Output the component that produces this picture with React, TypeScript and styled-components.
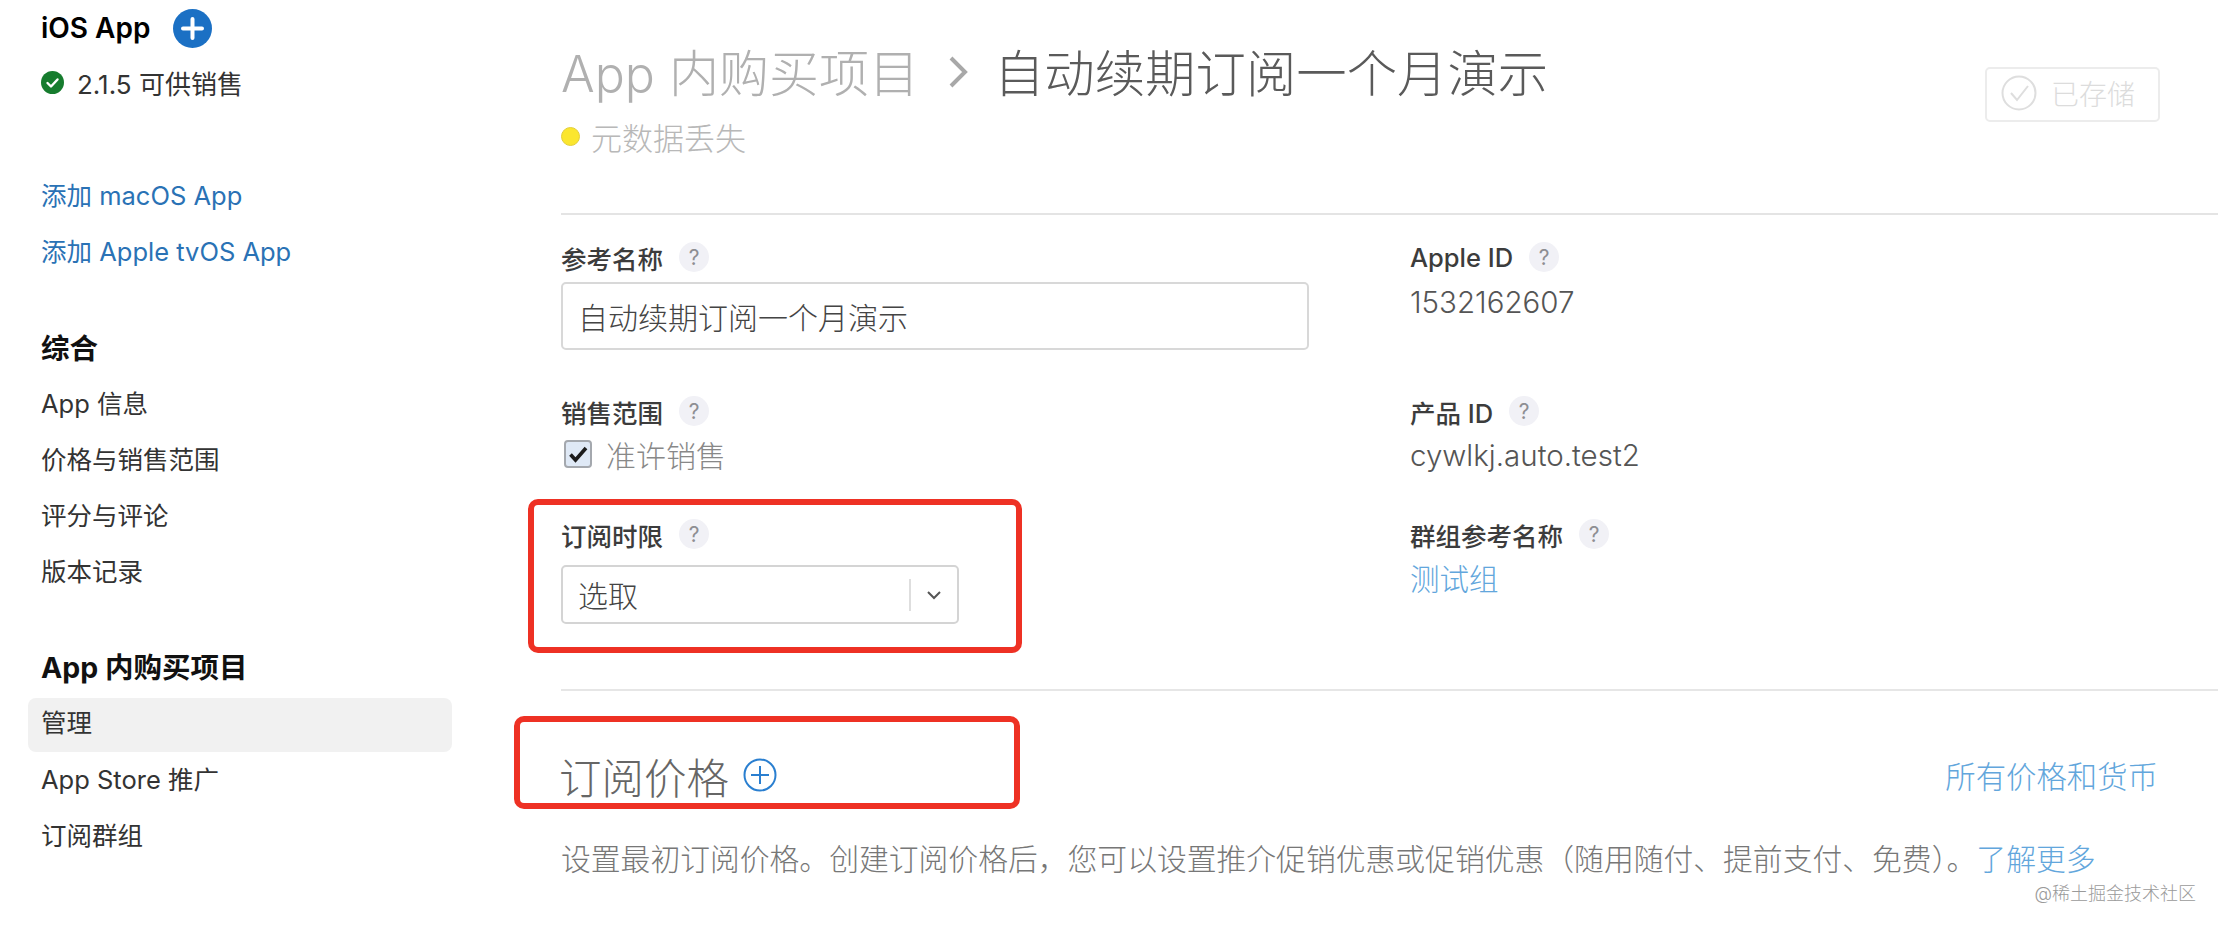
import React from "react";
import styled, { createGlobalStyle } from "styled-components";

const Global = createGlobalStyle`
  html, body { margin: 0; padding: 0; background: #fff; }
  body { font-family: Inter, "Noto Sans CJK SC", sans-serif; color: #333; }
  * { box-sizing: border-box; }
`;

const Page = styled.div`
  position: relative;
  width: 2222px;
  height: 928px;
  overflow: hidden;
  display: flex;
  background: #fff;
`;

const Sidebar = styled.aside`
  width: 561px;
  flex: none;
  padding-left: 41px;
  display: flex;
  flex-direction: column;
`;

const AppHead = styled.div`
  height: 56px;
  display: flex;
  align-items: center;
  gap: 23px;
  font-size: 28px;
  font-weight: 600;
  color: #000;
`;

const Status = styled.div`
  height: 52px;
  display: flex;
  align-items: center;
  gap: 13px;
  font-size: 26px;
  color: #333;
`;

const SideLink = styled.a<{ $top?: number }>`
  height: 56px;
  margin-top: ${(p) => p.$top ?? 0}px;
  padding-bottom: 3px;
  display: flex;
  align-items: center;
  font-size: 25.5px;
  color: #2a72b5;
`;

const SideHeading = styled.div<{ $top: number }>`
  height: 56px;
  margin-top: ${(p) => p.$top}px;
  padding-bottom: 6px;
  display: flex;
  align-items: center;
  font-size: 28.5px;
  font-weight: 700;
  color: #111;
`;

const SideItem = styled.div<{ $active?: boolean }>`
  height: ${(p) => (p.$active ? 54 : 56)}px;
  margin: ${(p) => (p.$active ? "2px 0 1px -13px" : "0")};
  width: ${(p) => (p.$active ? "424px" : "auto")};
  padding: 0 0 ${(p) => (p.$active ? 9 : 7)}px ${(p) => (p.$active ? 13 : 0)}px;
  display: flex;
  align-items: center;
  font-size: 25.5px;
  border-radius: 8px;
  color: #333;
  background: ${(p) => (p.$active ? "#f1f1f1" : "transparent")};
`;

const Main = styled.main`
  width: 1657px;
  flex: none;
`;

const Header = styled.header`
  height: 215px;
  border-bottom: 2px solid #e4e4e4;
  display: flex;
  justify-content: space-between;
  align-items: flex-start;
  padding: 40px 58px 0 0;
`;

const TitleBlock = styled.div`
  display: flex;
  flex-direction: column;
  gap: 16px;
`;

const Title = styled.h1`
  margin: 0;
  height: 60px;
  display: flex;
  align-items: center;
  font-size: 50px;
  font-weight: 300;
  color: #5a5a5a;
`;

const Crumb = styled.span`
  color: #b0b0b0;
`;

const CurrentTitle = styled.span`
  font-size: 50.4px;
`;

const Chevron = styled.svg`
  width: 22px;
  height: 36px;
  margin: 4px 25px 0 28px;
`;

const Sub = styled.div`
  height: 40px;
  display: flex;
  align-items: center;
  gap: 11px;
  font-size: 31px;
  font-weight: 300;
  color: #b8b8b8;
`;

const Dot = styled.span`
  width: 19px;
  height: 19px;
  border-radius: 50%;
  background: #fbe62e;
  border: 1px solid #e3cf3a;
`;

const SaveButton = styled.div`
  margin-top: 27px;
  width: 175px;
  height: 55px;
  border: 2px solid #ececec;
  border-radius: 5px;
  display: flex;
  align-items: center;
  padding: 0 0 3px 14px;
  gap: 14px;
  font-size: 28px;
  font-weight: 300;
  color: #dcdcdc;
`;

const Form = styled.div`
  height: 474px;
  padding-top: 24px;
  display: grid;
  grid-template-columns: 849px 1fr;
  grid-template-rows: 154px 123px 173px;
`;

const Field = styled.div`
  display: flex;
  flex-direction: column;
  align-items: flex-start;
`;

const Label = styled.div`
  height: 36px;
  display: flex;
  align-items: center;
  gap: 16px;
  font-size: 25.5px;
  font-weight: 500;
  color: #3c3c3c;
`;

const Help = styled.span`
  width: 30px;
  height: 30px;
  border-radius: 50%;
  background: #f1f1f6;
  color: #8e8e93;
  font-size: 21px;
  font-weight: 400;
  display: flex;
  align-items: center;
  justify-content: center;
`;

const TextInput = styled.div`
  margin-top: 7px;
  width: 748px;
  height: 68px;
  border: 2px solid #d8d8d8;
  border-radius: 5px;
  padding-left: 15px;
  display: flex;
  align-items: center;
  font-size: 30px;
  font-weight: 300;
  color: #444;
`;

const Value = styled.div<{ $gap: number; $link?: boolean }>`
  margin-top: ${(p) => p.$gap}px;
  height: 40px;
  display: flex;
  align-items: center;
  font-size: 29.5px;
  font-weight: 300;
  color: ${(p) => (p.$link ? "#62a6dc" : "#555")};
`;

const CheckRow = styled.div`
  margin-top: 5px;
  height: 40px;
  padding-left: 3px;
  display: flex;
  align-items: center;
  gap: 14px;
  font-size: 30px;
  font-weight: 300;
  color: #888;
`;

const CheckBox = styled.span`
  width: 28px;
  height: 28px;
  border: 2px solid #a4a8ae;
  border-radius: 4px;
  background: #dfe9f6;
  display: flex;
  align-items: center;
  justify-content: center;
`;

const SelectBox = styled.div`
  margin-top: 13px;
  width: 398px;
  height: 59px;
  border: 2px solid #d4d4d4;
  border-radius: 5px;
  display: flex;
  align-items: center;
  padding: 0 0 0 15px;
  font-size: 30px;
  font-weight: 300;
  color: #444;
`;

const SelectText = styled.span`
  flex: 1;
  margin-top: -2px;
`;

const SelectDivider = styled.span`
  width: 2px;
  height: 32px;
  background: #dedede;
`;

const SelectArrow = styled.span`
  width: 46px;
  display: flex;
  justify-content: center;
`;

const Section = styled.section`
  border-top: 2px solid #e6e6e6;
  padding-top: 54px;
  padding-right: 60px;
`;

const SectionHead = styled.div`
  height: 60px;
  display: flex;
  align-items: center;
`;

const SectionTitle = styled.h2`
  margin: 0 0 0 -2px;
  font-size: 42.5px;
  font-weight: 300;
  color: #666;
`;

const AddIcon = styled.svg`
  width: 34px;
  height: 34px;
  margin-left: 14px;
`;

const AllPrices = styled.a`
  margin-left: auto;
  font-size: 30.4px;
  font-weight: 300;
  color: #62a6dc;
`;

const Para = styled.p`
  margin: 32px 0 0;
  height: 40px;
  display: flex;
  align-items: center;
  font-size: 29.8px;
  font-weight: 300;
  color: #777;
  white-space: nowrap;
`;

const ParaLink = styled.a`
  color: #62a6dc;
`;

const RedBox = styled.div<{ $x: number; $y: number; $w: number; $h: number }>`
  position: absolute;
  left: ${(p) => p.$x}px;
  top: ${(p) => p.$y}px;
  width: ${(p) => p.$w}px;
  height: ${(p) => p.$h}px;
  border: 6px solid #ee3124;
  border-radius: 10px;
`;

const Watermark = styled.div`
  position: absolute;
  right: 26px;
  top: 879px;
  font-size: 18px;
  font-weight: 300;
  color: #9a9a9a;
`;

const Q = () => <Help>?</Help>;

export default function App() {
  return (
    <Page>
      <Global />
      <Sidebar>
        <AppHead>
          iOS App
          <svg width="39" height="39" viewBox="0 0 39 39">
            <circle cx="19.5" cy="19.5" r="19.5" fill="#1b70c4" />
            <path d="M19.5 10v19M10 19.5h19" stroke="#fff" strokeWidth="4" strokeLinecap="round" />
          </svg>
        </AppHead>
        <Status>
          <svg width="23" height="23" viewBox="0 0 23 23">
            <circle cx="11.5" cy="11.5" r="11.5" fill="#167c2e" />
            <path d="M6.5 12l3.5 3.5 6.5-7" fill="none" stroke="#fff" strokeWidth="2.4" strokeLinecap="round" strokeLinejoin="round" />
          </svg>
          2.1.5 可供销售
        </Status>
        <SideLink $top={59}>添加 macOS App</SideLink>
        <SideLink>添加 Apple tvOS App</SideLink>
        <SideHeading $top={42}>综合</SideHeading>
        <SideItem>App 信息</SideItem>
        <SideItem>价格与销售范围</SideItem>
        <SideItem>评分与评论</SideItem>
        <SideItem>版本记录</SideItem>
        <SideHeading $top={39}>App 内购买项目</SideHeading>
        <SideItem $active>管理</SideItem>
        <SideItem>App Store 推广</SideItem>
        <SideItem>订阅群组</SideItem>
      </Sidebar>
      <Main>
        <Header>
          <TitleBlock>
            <Title>
              <Crumb>App 内购买项目</Crumb>
              <Chevron viewBox="0 0 22 36">
                <path d="M4 4l14 14L4 32" fill="none" stroke="#a8a8a8" strokeWidth="4" />
              </Chevron>
              <CurrentTitle>自动续期订阅一个月演示</CurrentTitle>
            </Title>
            <Sub>
              <Dot />
              元数据丢失
            </Sub>
          </TitleBlock>
          <SaveButton>
            <svg width="36" height="36" viewBox="0 0 36 36">
              <circle cx="18" cy="18" r="16.5" fill="none" stroke="#dedede" strokeWidth="2" />
              <path d="M10 18l6 7 11-14" fill="none" stroke="#dedede" strokeWidth="2" />
            </svg>
            已存储
          </SaveButton>
        </Header>
        <Form>
          <Field>
            <Label>参考名称 <Q /></Label>
            <TextInput>自动续期订阅一个月演示</TextInput>
          </Field>
          <Field>
            <Label>Apple ID <Q /></Label>
            <Value $gap={7}>1532162607</Value>
          </Field>
          <Field>
            <Label>销售范围 <Q /></Label>
            <CheckRow>
              <CheckBox>
                <svg width="22" height="22" viewBox="0 0 22 22">
                  <path d="M3.5 11.5l5 5.5L19 5" fill="none" stroke="#1c1c1c" strokeWidth="3.6" />
                </svg>
              </CheckBox>
              准许销售
            </CheckRow>
          </Field>
          <Field>
            <Label>产品 ID <Q /></Label>
            <Value $gap={6}>cywlkj.auto.test2</Value>
          </Field>
          <Field>
            <Label>订阅时限 <Q /></Label>
            <SelectBox>
              <SelectText>选取</SelectText>
              <SelectDivider />
              <SelectArrow>
                <svg width="16" height="10" viewBox="0 0 16 10">
                  <path d="M2 2l6 6 6-6" fill="none" stroke="#555" strokeWidth="2" />
                </svg>
              </SelectArrow>
            </SelectBox>
          </Field>
          <Field>
            <Label>群组参考名称 <Q /></Label>
            <Value $gap={5} $link>测试组</Value>
          </Field>
        </Form>
        <Section>
          <SectionHead>
            <SectionTitle>订阅价格</SectionTitle>
            <AddIcon viewBox="0 0 34 34">
              <circle cx="17" cy="17" r="15.5" fill="none" stroke="#2a7fd0" strokeWidth="2" />
              <path d="M17 8v18M8 17h18" stroke="#2a7fd0" strokeWidth="2" />
            </AddIcon>
            <AllPrices>所有价格和货币</AllPrices>
          </SectionHead>
          <Para>
            设置最初订阅价格。创建订阅价格后，您可以设置推介促销优惠或促销优惠（随用随付、提前支付、免费）。
            <ParaLink>了解更多</ParaLink>
          </Para>
        </Section>
      </Main>
      <RedBox $x={528} $y={499} $w={494} $h={154} />
      <RedBox $x={514} $y={716} $w={506} $h={93} />
      <Watermark>@稀土掘金技术社区</Watermark>
    </Page>
  );
}
